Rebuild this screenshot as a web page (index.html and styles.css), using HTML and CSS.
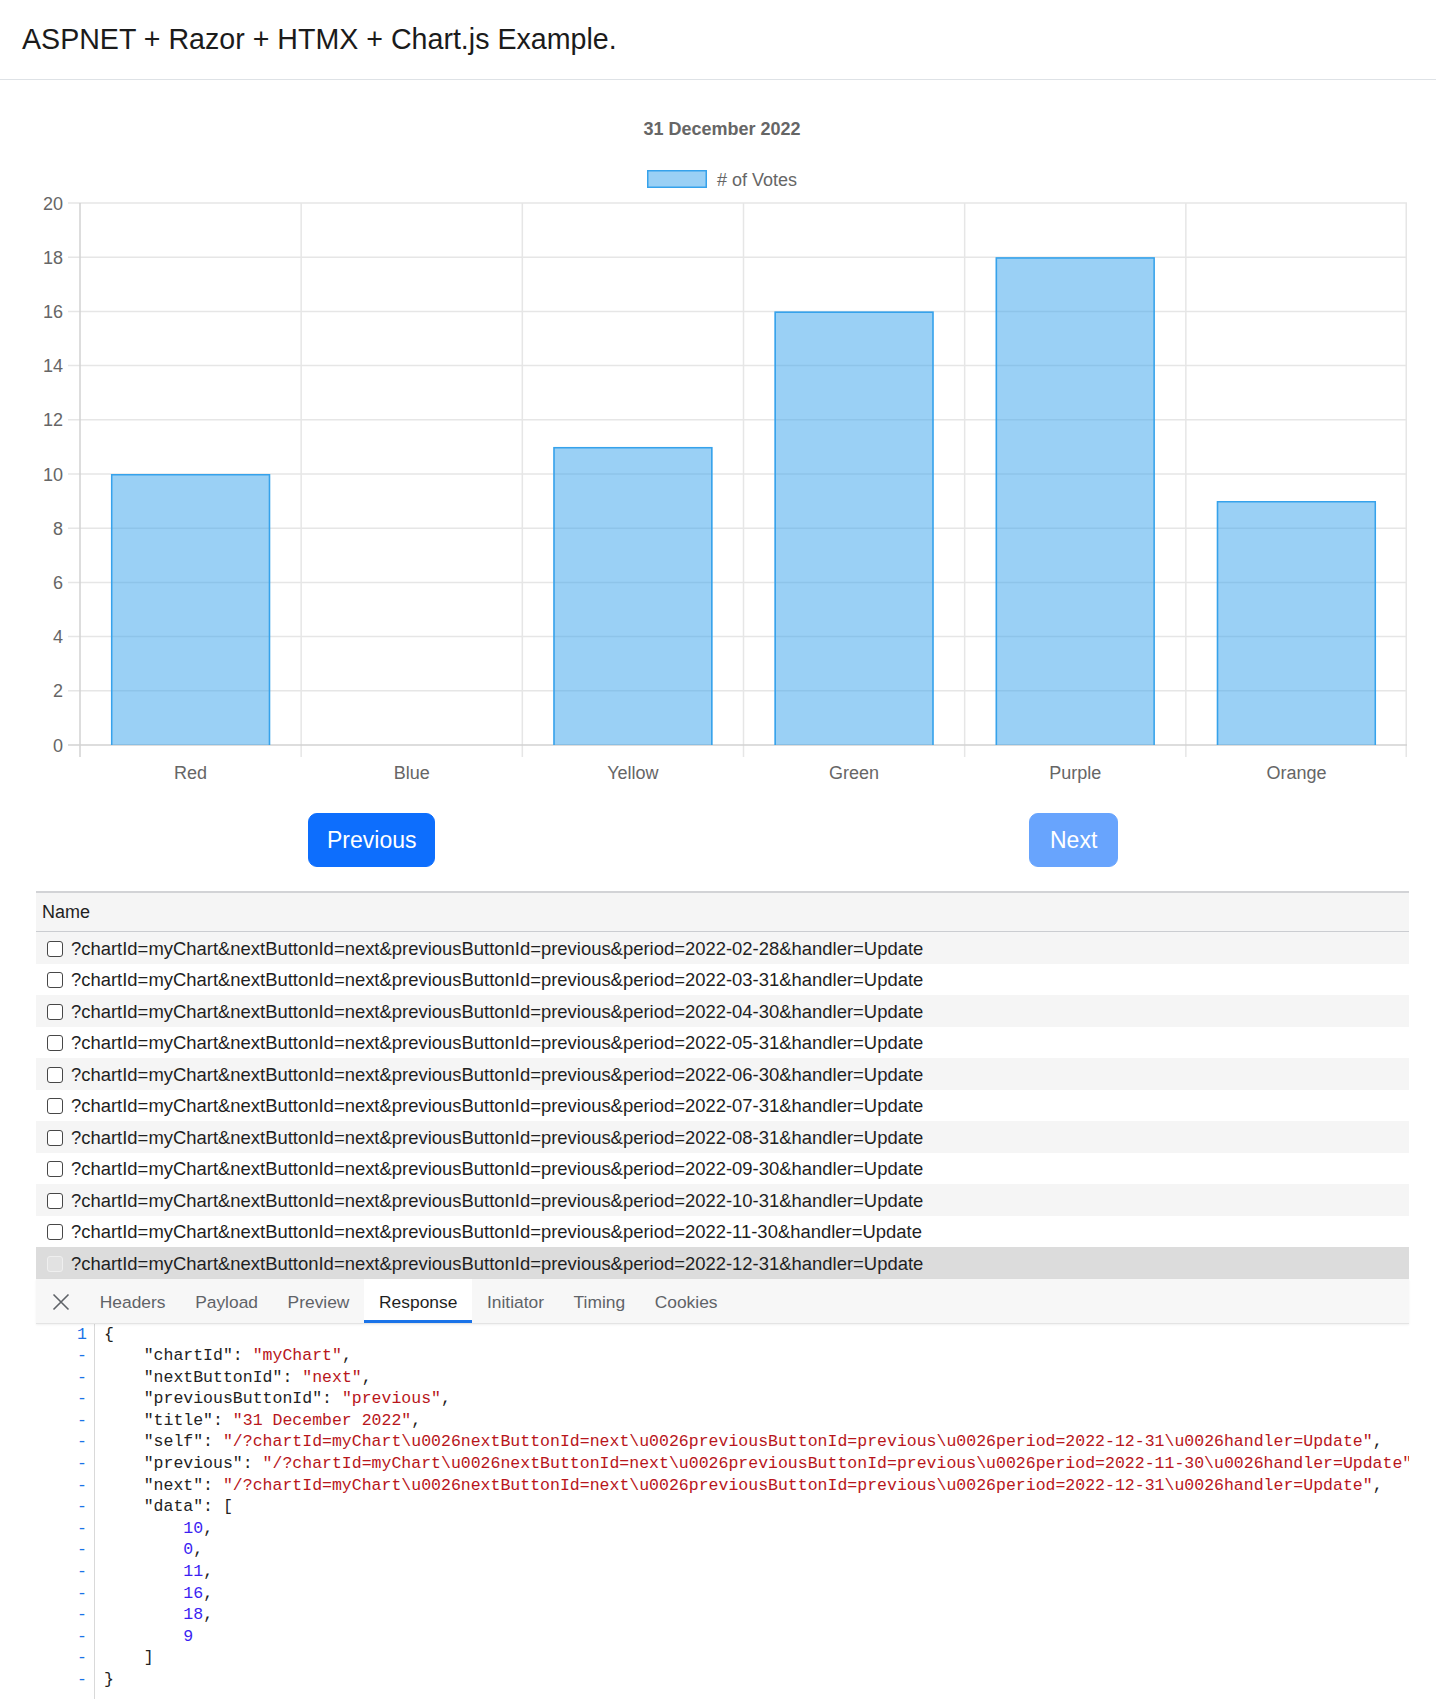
FILE: index.html
```html
<!DOCTYPE html>
<html lang="en">
<head>
<meta charset="utf-8">
<title>ASPNET + Razor + HTMX + Chart.js Example.</title>
<link rel="stylesheet" href="styles.css">
</head>
<body>
<header class="top">
  <h1 class="brand">ASPNET + Razor + HTMX + Chart.js Example.</h1>
</header>
<main class="page">
  <div class="chart">
    <svg class="bar-chart" width="1372" height="720" viewBox="0 0 1372 720">
      <text class="chart-title" x="686" y="54.5" text-anchor="middle">31 December 2022</text>
      <rect class="legend-box" x="611.75" y="90.75" width="58.5" height="16.5"/>
      <text class="chart-label" x="681" y="105.5">#&nbsp;of Votes</text>

      <g class="grid">
        <line x1="32" y1="123" x2="1371" y2="123"/>
        <line x1="32" y1="177.2" x2="1371" y2="177.2"/>
        <line x1="32" y1="231.4" x2="1371" y2="231.4"/>
        <line x1="32" y1="285.6" x2="1371" y2="285.6"/>
        <line x1="32" y1="339.8" x2="1371" y2="339.8"/>
        <line x1="32" y1="394" x2="1371" y2="394"/>
        <line x1="32" y1="448.2" x2="1371" y2="448.2"/>
        <line x1="32" y1="502.4" x2="1371" y2="502.4"/>
        <line x1="32" y1="556.6" x2="1371" y2="556.6"/>
        <line x1="32" y1="610.8" x2="1371" y2="610.8"/>
        <line x1="265.17" y1="123" x2="265.17" y2="677"/>
        <line x1="486.33" y1="123" x2="486.33" y2="677"/>
        <line x1="707.5" y1="123" x2="707.5" y2="677"/>
        <line x1="928.67" y1="123" x2="928.67" y2="677"/>
        <line x1="1149.83" y1="123" x2="1149.83" y2="677"/>
        <line x1="1370.25" y1="123" x2="1370.25" y2="677"/>
      </g>
      <g class="axis">
        <line x1="44" y1="123" x2="44" y2="677"/>
        <line x1="32" y1="665" x2="1371" y2="665"/>
      </g>

      <g class="y-labels">
        <text class="chart-label" x="27" y="129.5" text-anchor="end">20</text>
        <text class="chart-label" x="27" y="183.7" text-anchor="end">18</text>
        <text class="chart-label" x="27" y="237.9" text-anchor="end">16</text>
        <text class="chart-label" x="27" y="292.1" text-anchor="end">14</text>
        <text class="chart-label" x="27" y="346.3" text-anchor="end">12</text>
        <text class="chart-label" x="27" y="400.5" text-anchor="end">10</text>
        <text class="chart-label" x="27" y="454.7" text-anchor="end">8</text>
        <text class="chart-label" x="27" y="508.9" text-anchor="end">6</text>
        <text class="chart-label" x="27" y="563.1" text-anchor="end">4</text>
        <text class="chart-label" x="27" y="617.3" text-anchor="end">2</text>
        <text class="chart-label" x="27" y="671.5" text-anchor="end">0</text>
      </g>

      <g class="bars">
        <rect class="bar-fill" x="74.96" y="394" width="159.24" height="271"/>
        <path class="bar-edge" d="M75.71 665 V394.75 H233.45 V665"/>
        <rect class="bar-fill" x="517.29" y="366.9" width="159.24" height="298.1"/>
        <path class="bar-edge" d="M518.04 665 V367.65 H675.78 V665"/>
        <rect class="bar-fill" x="738.46" y="231.4" width="159.24" height="433.6"/>
        <path class="bar-edge" d="M739.21 665 V232.15 H896.95 V665"/>
        <rect class="bar-fill" x="959.63" y="177.2" width="159.24" height="487.8"/>
        <path class="bar-edge" d="M960.38 665 V177.95 H1118.12 V665"/>
        <rect class="bar-fill" x="1180.79" y="421.1" width="159.24" height="243.9"/>
        <path class="bar-edge" d="M1181.54 665 V421.85 H1339.28 V665"/>
      </g>

      <g class="x-labels">
        <text class="chart-label" x="154.58" y="698.5" text-anchor="middle">Red</text>
        <text class="chart-label" x="375.75" y="698.5" text-anchor="middle">Blue</text>
        <text class="chart-label" x="596.92" y="698.5" text-anchor="middle">Yellow</text>
        <text class="chart-label" x="818.08" y="698.5" text-anchor="middle">Green</text>
        <text class="chart-label" x="1039.25" y="698.5" text-anchor="middle">Purple</text>
        <text class="chart-label" x="1260.42" y="698.5" text-anchor="middle">Orange</text>
      </g>
    </svg>
  </div>

  <div class="nav-buttons">
    <button class="btn btn-prev" type="button">Previous</button>
    <button class="btn btn-next" type="button" disabled>Next</button>
  </div>

  <section class="devtools">
    <div class="req-list">
      <div class="req-head">Name</div>
      <div class="req-row"><span class="check"></span>?chartId=myChart&amp;nextButtonId=next&amp;previousButtonId=previous&amp;period=2022-02-28&amp;handler=Update</div>
      <div class="req-row"><span class="check"></span>?chartId=myChart&amp;nextButtonId=next&amp;previousButtonId=previous&amp;period=2022-03-31&amp;handler=Update</div>
      <div class="req-row"><span class="check"></span>?chartId=myChart&amp;nextButtonId=next&amp;previousButtonId=previous&amp;period=2022-04-30&amp;handler=Update</div>
      <div class="req-row"><span class="check"></span>?chartId=myChart&amp;nextButtonId=next&amp;previousButtonId=previous&amp;period=2022-05-31&amp;handler=Update</div>
      <div class="req-row"><span class="check"></span>?chartId=myChart&amp;nextButtonId=next&amp;previousButtonId=previous&amp;period=2022-06-30&amp;handler=Update</div>
      <div class="req-row"><span class="check"></span>?chartId=myChart&amp;nextButtonId=next&amp;previousButtonId=previous&amp;period=2022-07-31&amp;handler=Update</div>
      <div class="req-row"><span class="check"></span>?chartId=myChart&amp;nextButtonId=next&amp;previousButtonId=previous&amp;period=2022-08-31&amp;handler=Update</div>
      <div class="req-row"><span class="check"></span>?chartId=myChart&amp;nextButtonId=next&amp;previousButtonId=previous&amp;period=2022-09-30&amp;handler=Update</div>
      <div class="req-row"><span class="check"></span>?chartId=myChart&amp;nextButtonId=next&amp;previousButtonId=previous&amp;period=2022-10-31&amp;handler=Update</div>
      <div class="req-row"><span class="check"></span>?chartId=myChart&amp;nextButtonId=next&amp;previousButtonId=previous&amp;period=2022-11-30&amp;handler=Update</div>
      <div class="req-row selected"><span class="check"></span>?chartId=myChart&amp;nextButtonId=next&amp;previousButtonId=previous&amp;period=2022-12-31&amp;handler=Update</div>
    </div>

    <div class="tabs">
      <div class="close">
        <svg width="18" height="18" viewBox="0 0 18 18"><path d="M1.5 1.5 L16.5 16.5 M16.5 1.5 L1.5 16.5" class="close-x"/></svg>
      </div>
      <div class="tab">Headers</div>
      <div class="tab">Payload</div>
      <div class="tab">Preview</div>
      <div class="tab active">Response</div>
      <div class="tab">Initiator</div>
      <div class="tab">Timing</div>
      <div class="tab">Cookies</div>
    </div>

    <div class="code">
      <div class="gutter">
        <div>1</div><div>-</div><div>-</div><div>-</div><div>-</div><div>-</div><div>-</div><div>-</div><div>-</div><div>-</div><div>-</div><div>-</div><div>-</div><div>-</div><div>-</div><div>-</div><div>-</div>
      </div>
      <div class="src">
        <div class="ln">{</div>
        <div class="ln">    "chartId": <span class="s">"myChart"</span>,</div>
        <div class="ln">    "nextButtonId": <span class="s">"next"</span>,</div>
        <div class="ln">    "previousButtonId": <span class="s">"previous"</span>,</div>
        <div class="ln">    "title": <span class="s">"31 December 2022"</span>,</div>
        <div class="ln">    "self": <span class="s">"/?chartId=myChart\u0026nextButtonId=next\u0026previousButtonId=previous\u0026period=2022-12-31\u0026handler=Update"</span>,</div>
        <div class="ln">    "previous": <span class="s">"/?chartId=myChart\u0026nextButtonId=next\u0026previousButtonId=previous\u0026period=2022-11-30\u0026handler=Update"</span>,</div>
        <div class="ln">    "next": <span class="s">"/?chartId=myChart\u0026nextButtonId=next\u0026previousButtonId=previous\u0026period=2022-12-31\u0026handler=Update"</span>,</div>
        <div class="ln">    "data": [</div>
        <div class="ln">        <span class="n">10</span>,</div>
        <div class="ln">        <span class="n">0</span>,</div>
        <div class="ln">        <span class="n">11</span>,</div>
        <div class="ln">        <span class="n">16</span>,</div>
        <div class="ln">        <span class="n">18</span>,</div>
        <div class="ln">        <span class="n">9</span></div>
        <div class="ln">    ]</div>
        <div class="ln">}</div>
      </div>
    </div>
  </section>
</main>
</body>
</html>
```

FILE: styles.css
```css
html, body {
  margin: 0;
  padding: 0;
  background: #ffffff;
}

body {
  font-family: "Liberation Sans", Arial, sans-serif;
  color: #212529;
}

/* ---------- header ---------- */
.top {
  height: 80px;
  box-sizing: border-box;
  padding: 23px 22px 0;
  border-bottom: 1px solid #dee2e6;
}

.brand {
  margin: 0;
  font-size: 28.6px;
  font-weight: 400;
  line-height: 33px;
  color: #1b1b1b;
}

/* ---------- page ---------- */
.page {
  margin-left: 36px;
  width: 1373px;
}

.chart svg {
  display: block;
}

.chart-title {
  font-family: "Liberation Sans", Arial, sans-serif;
  font-size: 18px;
  font-weight: 700;
  fill: #666666;
}

.chart-label {
  font-family: "Liberation Sans", Arial, sans-serif;
  font-size: 18px;
  fill: #666666;
}

.legend-box {
  fill: rgba(54, 162, 235, 0.5);
  stroke: #36a2eb;
  stroke-width: 1.5;
}

.grid line {
  stroke: #e6e6e6;
  stroke-width: 1.5;
}

.axis line {
  stroke: #d2d2d2;
  stroke-width: 1.5;
}

.bar-fill {
  fill: rgba(54, 162, 235, 0.5);
}

.bar-edge {
  fill: none;
  stroke: #36a2eb;
  stroke-width: 1.5;
}

/* ---------- buttons ---------- */
.nav-buttons {
  display: flex;
  margin-top: 13px;
  padding-left: 272px;
}

.btn {
  font-family: "Liberation Sans", Arial, sans-serif;
  font-size: 23px;
  line-height: 34px;
  padding: 9px 18px;
  border: 1px solid #0d6efd;
  background: #0d6efd;
  color: #ffffff;
  border-radius: 9px;
}

.btn-next {
  margin-left: 594px;
  padding: 9px 19.5px;
  opacity: 0.62;
}

/* ---------- devtools ---------- */
.devtools {
  margin-top: 24px;
}

.req-list {
  border-top: 2px solid #d2d3d6;
}

.req-head {
  height: 38px;
  display: flex;
  align-items: center;
  padding-left: 6px;
  background: #f5f5f5;
  border-bottom: 1px solid #cbcdd1;
  font-size: 18px;
  color: #1f1f1f;
}

.req-row {
  height: 31.5px;
  box-sizing: border-box;
  padding-top: 2px;
  display: flex;
  align-items: center;
  padding-left: 10.5px;
  font-size: 18.45px;
  color: #1f1f1f;
  white-space: nowrap;
}

.req-row:nth-child(even) {
  background: #f5f5f5;
}

.req-row.selected {
  background: #dcdcdc;
}

.check {
  width: 14px;
  height: 14px;
  border: 1.5px solid #474747;
  border-radius: 3px;
  margin-right: 8.5px;
  flex: none;
  background: #ffffff;
}

.req-row.selected .check {
  border-color: #efefef;
  background: #e2e2e2;
}

.tabs {
  display: flex;
  height: 44px;
  background: #f7f7f7;
  border-bottom: 1px solid #e4e4e4;
  box-shadow: 0 1px 2px rgba(0, 0, 0, 0.06);
  position: relative;
}

.close {
  width: 49px;
  display: flex;
  align-items: center;
  justify-content: center;
  padding-top: 2px;
}

.close-x {
  stroke: #5f6368;
  stroke-width: 1.6;
  fill: none;
}

.tab {
  display: flex;
  align-items: center;
  padding: 3px 14.8px 0;
  font-size: 17.4px;
  color: #5f6368;
}

.tab.active {
  background: #ffffff;
  color: #1f1f1f;
  box-shadow: inset 0 -3px 0 #1a73e8;
}

.code {
  display: grid;
  grid-template-columns: 59px 1fr;
  height: 400px;
  overflow: hidden;
  font-family: "Liberation Mono", "DejaVu Sans Mono", monospace;
  font-size: 16.52px;
  line-height: 21.6px;
  background: #ffffff;
}

.gutter {
  border-right: 1px solid #d9d9d9;
  text-align: right;
  padding-right: 7px;
  color: #1a73e8;
}

.src {
  padding-left: 9px;
  overflow: hidden;
  color: #222222;
}

.ln {
  white-space: pre;
}

.s {
  color: #b8161b;
}

.n {
  color: #3b1ff2;
}
```
